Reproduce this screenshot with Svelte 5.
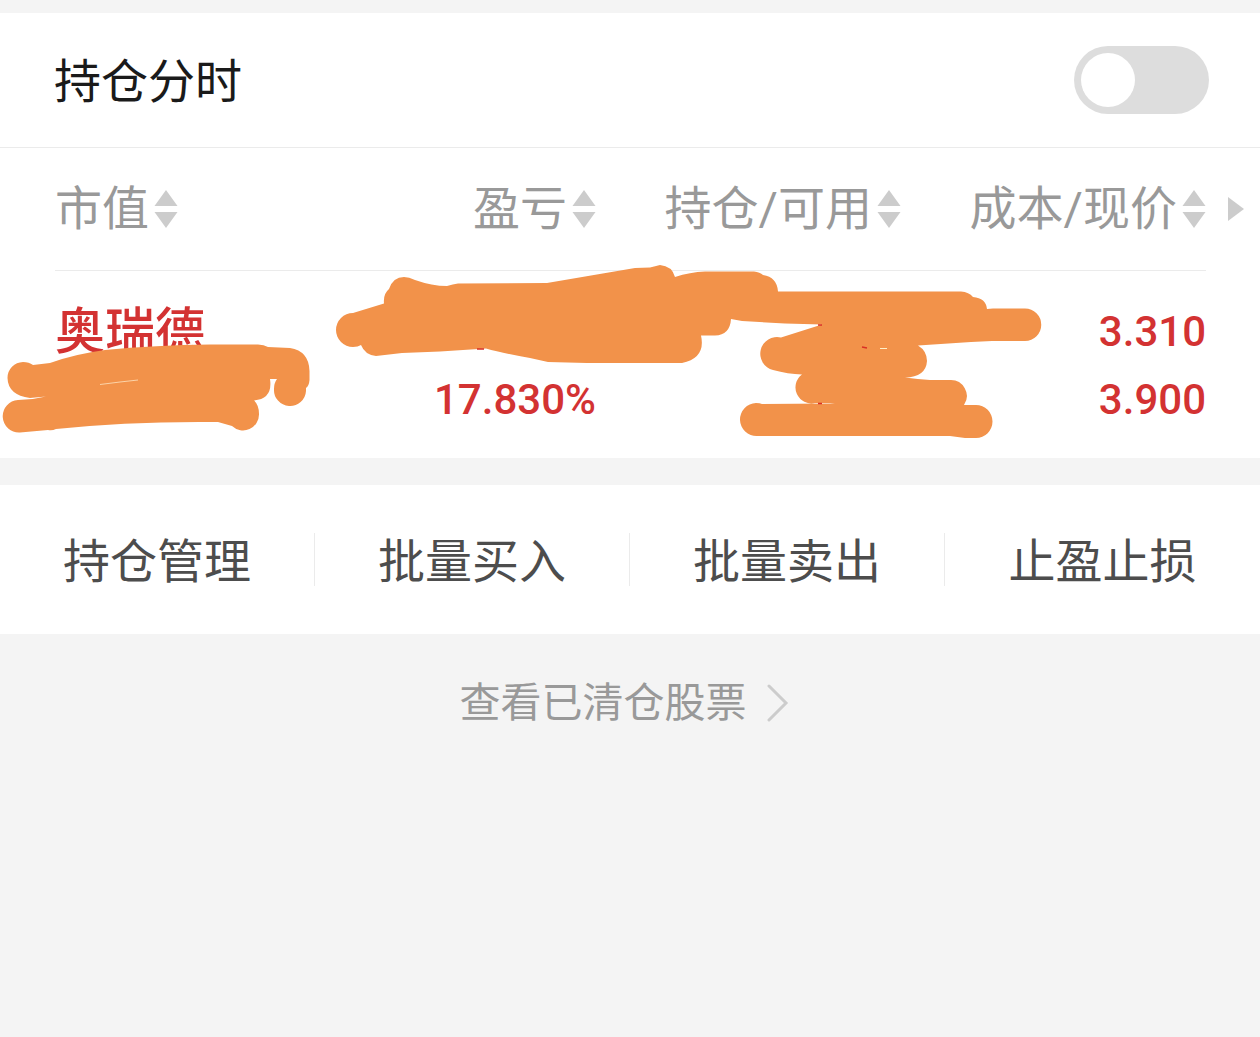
<script>
  let intraday = false;

  const columns = [
    { key: 'value', label: '市值' },
    { key: 'profit', label: '盈亏' },
    { key: 'amount', label: '持仓/可用' },
    { key: 'price', label: '成本/现价' },
  ];

  const holdings = [
    { name: '奥瑞德', rate: '17.830%', cost: '3.310', price: '3.900' },
  ];

  const actions = ['持仓管理', '批量买入', '批量卖出', '止盈止损'];

  let sortKey = '';

  function sortBy(key) {
    sortKey = sortKey === key ? '' : key;
  }
</script>

<main>
  <section class="setting">
    <label for="intraday">持仓分时</label>
    <input id="intraday" class="switch" type="checkbox" role="switch" bind:checked={intraday} />
  </section>

  <section class="holdings">
    <table>
      <thead>
        <tr>
          {#each columns as column}
            <th>
              <button class="sort" on:click={() => sortBy(column.key)}>
                {column.label}
                <svg width="24" height="38" viewBox="0 0 24 38" aria-hidden="true">
                  <path d="M12 0L23.500 16H.5ZM.5 22H23.500L12 38Z" fill="#ccc" />
                </svg>
              </button>
            </th>
          {/each}
        </tr>
      </thead>
      <tbody>
        {#each holdings as item}
          <tr>
            <td class="name">{item.name}</td>
            <td><br />{item.rate}</td>
            <td></td>
            <td>{item.cost}<br />{item.price}</td>
          </tr>
        {/each}
      </tbody>
    </table>

    <button class="more" aria-label="更多">
      <svg width="16" height="24" viewBox="0 0 16 24" aria-hidden="true">
        <path d="M0 0L16 12L0 24Z" fill="#ccc" />
      </svg>
    </button>

    <!-- marker strokes over the private figures -->
    <svg class="marker" viewBox="0 148 1260 310" aria-hidden="true">
      <g fill="#f2924a">
        <path
          d="M23 362Q29 362 33 365L50 363Q75 354 105 350Q155 345 210 344.500H258Q264 344.500 268 347L290 348Q309 351 309.500 371V380Q309 386 306 388V391A16 16 0 1 1 274 389Q274 383 277 379H270Q273 399 254 400.500Q259 405 259 414A16 16 0 0 1 232 426L218 422Q130 421 56 429Q52 431 48 430L20 432.500A16 16 0 0 1 18 400Q32 400 46 396.500L30 398Q8 395 7.500 378A16 16 0 0 1 23 362Z"
        />
        <path
          d="M353 313L384 303.500Q383 294 389 289Q393 277 404 277Q409 277 415 280Q432 286 447 286Q453 284 458 283.500L547 283L635 268L650 267.500L660 265Q672 266 675 277Q690 272 705 271.500H754Q760 272 763 275Q777 277 778 291.500H961Q969 292 973 297Q986 298 987 309L993 308.500H1025A16 16 0 0 1 1025 341H992L971 342L918 345.500Q927 351 927 361Q926 377 905 377.500Q918 379 930 380H950A16 16 0 0 1 964 405H976A16 16 0 0 1 976 438H965L950 436H757A16 16 0 0 1 756 403Q760 403 762 404L830 403.500L835 403H815A16 16 0 0 1 802 374.500Q788 374 773 370A16 16 0 0 1 781 337.500L822 324.500L785 323.500L742 321L731 319Q730 335 715 335.500H701Q706 358 682 363H587L548 362L530 358Q502 353 486 348.500L440 351.500L402 353L376 356Q365 355 361 345Q358 347 353 347A16 16 0 0 1 353 313Z"
        />
      </g>
      <path d="M100 384.500L120 382L138 380" fill="none" stroke="#fbd3a8" stroke-width="1" />
      <path d="M818 325h4M818 403.500h4M862 347l5 1M477 349h7" fill="none" stroke="#d93025" stroke-width="1.500" />
      <path d="M880 348.500h7" fill="none" stroke="#fff0c8" stroke-width="1" />
    </svg>
  </section>

  <nav class="actions">
    {#each actions as action}
      <button>{action}</button>
    {/each}
  </nav>

  <a class="cleared" href="#cleared">
    查看已清仓股票
    <svg width="36" height="38" viewBox="0 0 36 38" aria-hidden="true">
      <path d="M4 2L21 19L4 36" fill="none" stroke="#ccc" stroke-width="3" stroke-linecap="round" />
    </svg>
  </a>
</main>

<style>
  :global(body) {
    background: #f4f4f4;
  }

  main {
    padding-top: 13px;
    font-family: Roboto, 'Noto Sans CJK SC', sans-serif;
    font-size: 47px;
    line-height: 68px;
    color: #1a1a1a;
  }

  button {
    padding: 0;
    border: none;
    background: none;
    font: inherit;
    color: inherit;
    cursor: pointer;
  }

  .setting {
    display: flex;
    align-items: center;
    justify-content: space-between;
    padding: 33px 51px 33px 54px;
    border-bottom: 1px solid #ebebeb;
    background: #fff;
  }

  .setting label {
    padding-top: 4px;
    line-height: 64px;
  }

  .switch {
    display: flex;
    align-items: center;
    width: 135px;
    height: 68px;
    margin: 0;
    padding: 0 7px;
    box-sizing: border-box;
    appearance: none;
    border-radius: 34px;
    background: #ddd;
    cursor: pointer;
  }

  .switch::before {
    content: '';
    width: 54px;
    height: 54px;
    border-radius: 50%;
    background: #fff;
  }

  .switch:checked {
    justify-content: flex-end;
    background: #d33232;
  }

  .holdings {
    position: relative;
    padding: 0 54px 0 55px;
    background: #fff;
  }

  table {
    width: 100%;
    table-layout: fixed;
    border-spacing: 0;
  }

  th {
    width: 26.5%;
    padding: 27px 0;
    border-bottom: 1px solid #ebebeb;
    font-weight: 400;
    color: #999;
    text-align: right;
    white-space: nowrap;
  }

  th:first-child {
    width: 20.5%;
    text-align: left;
  }

  .sort {
    display: inline-flex;
    align-items: center;
    gap: 5px;
    vertical-align: top;
  }

  td {
    padding: 27px 0 24px;
    font-size: 42px;
    font-weight: 500;
    color: #d33232;
    text-align: right;
    vertical-align: top;
  }

  .name {
    font-size: 50px;
    text-align: left;
  }

  .more {
    position: absolute;
    top: 49px;
    right: 16px;
    display: flex;
  }

  .marker {
    position: absolute;
    top: 0;
    left: 0;
    width: 100%;
    pointer-events: none;
  }

  .actions {
    display: grid;
    grid-template-columns: repeat(4, 1fr);
    margin-top: 27px;
    padding: 48px 0;
    background: #fff;
    color: #4d4d4d;
  }

  .actions button {
    padding-top: 4px;
    border-right: 1px solid #ebebeb;
    line-height: 49px;
  }

  .actions button:last-child {
    border-right: none;
  }

  .cleared {
    display: flex;
    align-items: center;
    justify-content: center;
    gap: 18px;
    padding: 35px 0;
    font-size: 41px;
    color: #999;
    text-decoration: none;
  }
</style>
